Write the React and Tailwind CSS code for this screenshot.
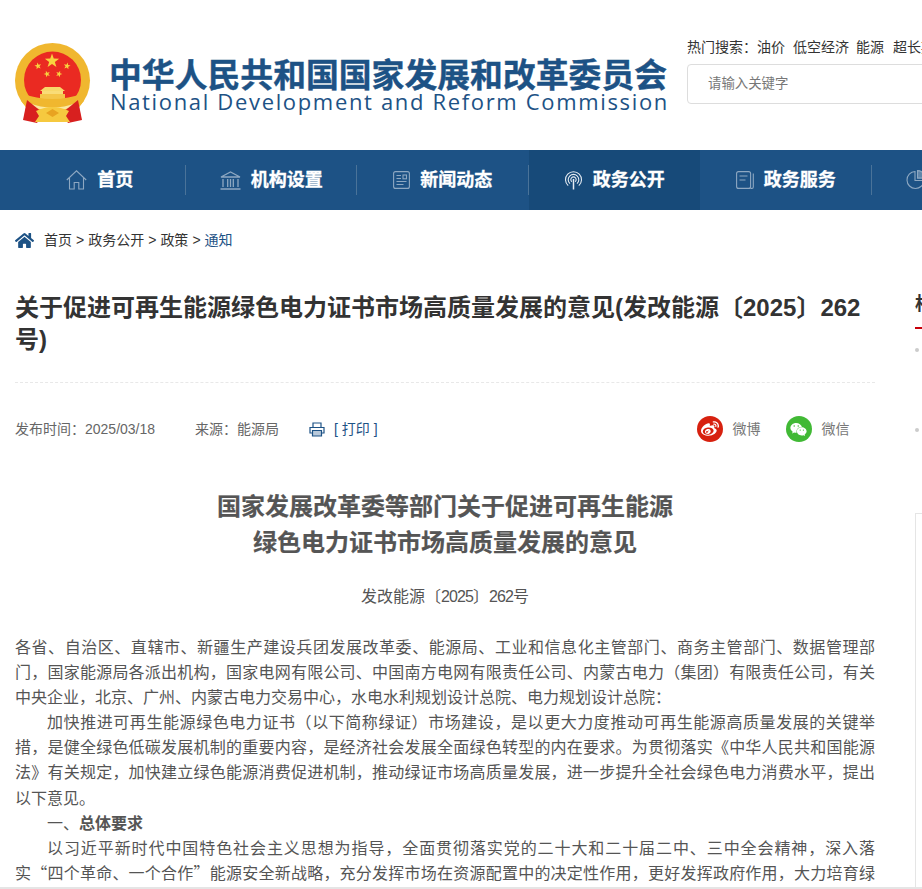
import { FaHome, FaWeibo, FaWeixin } from "react-icons/fa";

function Emblem() {
  const star = (cx, cy, r, rot = 0) => {
    const pts = [];
    for (let i = 0; i < 10; i++) {
      const a = ((-90 + rot + i * 36) * Math.PI) / 180;
      const rr = i % 2 === 0 ? r : r * 0.4;
      pts.push(`${cx + rr * Math.cos(a)},${cy + rr * Math.sin(a)}`);
    }
    return <polygon points={pts.join(" ")} fill="#f8d33f" />;
  };
  return (
    <svg width="76" height="80" viewBox="0 0 76 80" className="shrink-0 block">
      <defs>
        <clipPath id="ring">
          <circle cx="37.500" cy="37.500" r="37.500" />
        </clipPath>
      </defs>
      <circle cx="37.500" cy="37.500" r="37.500" fill="#f0b72f" />
      <circle cx="37.500" cy="37" r="28.500" fill="#ea2a22" />
      {star(37, 18, 7.500)}
      {star(23, 23, 3.600, -12)}
      {star(52, 23, 3.600, 12)}
      {star(32, 31, 3.400, -20)}
      {star(44, 31, 3.400, 20)}
      <path d="M30 44 h15 l5 4 h-25 z" fill="#f8d86a" />
      <rect x="27" y="48" width="21" height="3" fill="#f9dc77" />
      <rect x="25" y="51" width="25" height="6" fill="#f4c64a" />
      <path d="M6 50 Q37.500 62 69 50 V80 H6 Z" fill="#f0b72f" clipPath="url(#ring)" />
      <path d="M14 60 Q37.500 69 61 60 L60 63 Q37.500 72 15 63 Z" fill="#fbe8a0" />
      <path d="M12 57 L8 77 L22 80 L28 70 Z" fill="#d8201f" />
      <path d="M63 57 L67 77 L53 80 L47 70 Z" fill="#d8201f" />
      <path d="M21 68 Q37.500 60 54 68 L51 73 L55 79 L20 79 L24 73 Z" fill="#f6c93f" />
      <path d="M31 70 L37.500 66 L44 70 L37.500 74 Z" fill="#e8a321" />
    </svg>
  );
}

const iconClass = "shrink-0 text-[#8ea8c2]";

const icons = {
  home: (
    <svg width="21" height="20" viewBox="0 0 21 20" fill="none" stroke="currentColor" strokeWidth="1.1" className={iconClass}>
      <path d="M.8 10 10.500 .8 20.200 10M3.500 8v11h4.700v-6.500h4.600V19h4.700V8" />
    </svg>
  ),
  bank: (
    <svg width="21" height="19" viewBox="0 0 21 19" fill="none" stroke="currentColor" strokeWidth="1.3" className={iconClass}>
      <path d="M1 6 10.500 1 20 6Z" />
      <path d="M3 8v8M7.700 8v8M13.300 8v8M18 8v8M10.500 8v8M.5 18h20" />
    </svg>
  ),
  news: (
    <svg width="17" height="18" viewBox="0 0 17 18" fill="none" stroke="currentColor" strokeWidth="1.1" className={iconClass}>
      <rect x=".6" y=".6" width="15.800" height="16.800" rx="2" />
      <path d="M3.500 4.500H8M3.500 7.500H8M3.500 10.500h10M3.500 13.500h7" />
      <rect x="10" y="4" width="3.500" height="3.800" />
    </svg>
  ),
  signal: (
    <svg width="19" height="19" viewBox="0 0 19 19" fill="none" stroke="#e4ebf2" strokeWidth="1.1" className="shrink-0">
      <path d="M4.200 14.700a8 8 0 1 1 10.600 0M6 12.700a5.300 5.300 0 1 1 7 0M7.800 10.700a2.700 2.700 0 1 1 3.400 0" />
      <path d="M9.500 8v10.500" strokeWidth="1.500" />
    </svg>
  ),
  book: (
    <svg width="18" height="18" viewBox="0 0 18 18" fill="none" stroke="currentColor" strokeWidth="1.1" className={iconClass}>
      <rect x=".6" y=".6" width="14" height="16.800" rx="2" />
      <path d="M3.500 5h8M3.500 9h6M17.300 2.500V16a1.400 1.400 0 0 1-1.400 1.400h-1.500" />
    </svg>
  ),
  pie: (
    <svg width="20" height="20" viewBox="0 0 20 20" fill="none" stroke="currentColor" strokeWidth="1.100" className={iconClass}>
      <path d="M9 1.500A8.500 8.500 0 1 0 18 10.500H9Z" />
      <path d="M11.500 .6v7.500H19.500A8 8 0 0 0 11.500 .6Z" fill="currentColor" fillOpacity=".6" />
    </svg>
  ),
};

const navItems = [
  { icon: "home", label: "首页" },
  { icon: "bank", label: "机构设置" },
  { icon: "news", label: "新闻动态" },
  { icon: "signal", label: "政务公开", active: true },
  { icon: "book", label: "政务服务" },
  { icon: "pie", label: "数据发布" },
];

function PrintIcon() {
  return (
    <svg width="16" height="15" viewBox="0 0 16 15" fill="none" stroke="#1d5285" strokeWidth="1.2" className="shrink-0">
      <path d="M4 5V1h8v4" />
      <path d="M3.500 11H1V5.500h14V11h-2.500" />
      <path d="M3.500 8.500h9v5.500h-9z" fill="#b9c9da" />
    </svg>
  );
}

export default function App() {
  return (
    <div className="relative w-full h-[889px] overflow-hidden bg-white font-['Liberation_Sans','Noto_Sans_CJK_SC',sans-serif] text-[#333]">
      <header className="flex h-[150px] w-[1300px]">
        <div className="flex w-[687px] pl-[15px] pt-[43px] shrink-0">
          <Emblem />
          <div className="ml-[18px] mt-[17px] w-[560px] shrink-0 text-[#1d5285]">
            <div className="h-[32px] text-[32.850px] leading-[32px] font-bold whitespace-nowrap [-webkit-text-stroke:0.4px_#1d5285]">中华人民共和国国家发展和改革委员会</div>
            <div className="pl-[1px] text-[22px] leading-[18px] tracking-[1.660px] whitespace-nowrap font-['Open_Sans',sans-serif]">National Development and Reform Commission</div>
          </div>
        </div>
        <div className="w-[400px] pt-[39px] shrink-0">
          <div className="flex h-[16px] text-[14px] leading-[16px] text-[#333] whitespace-nowrap">
            <span className="w-[70px]">热门搜索：</span>
            <span className="w-[36px]">油价</span>
            <span className="w-[63px]">低空经济</span>
            <span className="w-[37px]">能源</span>
            <span>超长期</span>
          </div>
          <div className="mt-[9px] flex h-[40px] w-[400px] items-center rounded-[4px] border border-[#ddd] pl-[20px] text-[13.400px] text-[#777]">请输入关键字</div>
        </div>
      </header>

      <nav className="flex h-[60px] w-[1300px] bg-[#1d5285] pl-[14px]">
        {navItems.map((item, i) => (
          <div key={item.label} className={`relative flex h-[60px] w-[171.500px] shrink-0 items-center justify-center gap-[10px] text-[18px] font-bold text-white ${item.active ? "bg-[#174a79]" : ""}`}>
            {icons[item.icon]}
            <span className="pt-[1px] [-webkit-text-stroke:0.3px_white]">{item.label}</span>
            {i !== 3 && <span className="absolute right-0 top-[15px] h-[30px] w-px bg-[#4a7399]" />}
          </div>
        ))}
      </nav>

      <div className="flex h-[60px] items-center pl-[15px] text-[14px] whitespace-nowrap">
        <FaHome className="text-[#1d5285] text-[19px] shrink-0" />
        <span className="ml-[10px]">首页</span>
        <span className="mx-[4px]">&gt;</span>
        <span>政务公开</span>
        <span className="mx-[4px]">&gt;</span>
        <span>政策</span>
        <span className="mx-[4px]">&gt;</span>
        <span className="text-[#1d5285]">通知</span>
      </div>

      <div className="flex w-[1300px]">
        <main className="ml-[15px] w-[860px] shrink-0">
          <h1 className="mt-[22px] text-[24px] leading-[32px] font-bold text-[#333]">关于促进可再生能源绿色电力证书市场高质量发展的意见(发改能源〔2025〕262号)</h1>
          <div className="mt-[26px] border-t border-dashed border-[#e8e8e8]" />
          <div className="mt-[28px] flex h-[36px] items-center text-[14px] text-[#666] whitespace-nowrap">
            <span className="w-[180px]">发布时间：2025/03/18</span>
            <span className="w-[114px]">来源：能源局</span>
            <PrintIcon />
            <span className="ml-[9px] pt-[1px] text-[#1d5285]">[ 打印 ]</span>
            <div className="ml-[319px] flex items-center">
              <span className="flex h-[26px] w-[26px] items-center justify-center rounded-full bg-[#d7210f] text-white"><FaWeibo className="text-[18px]" /></span>
              <span className="ml-[10px] w-[53px] text-[#777]">微博</span>
              <span className="flex h-[26px] w-[26px] items-center justify-center rounded-full bg-[#41b935] text-white"><FaWeixin className="text-[17px]" /></span>
              <span className="ml-[10px] text-[#777]">微信</span>
            </div>
          </div>
          <h2 className="mt-[42px] text-center text-[24px] leading-[36px] font-bold text-[#555] [-webkit-text-stroke:0.2px_#555]">国家发展改革委等部门关于促进可再生能源<br />绿色电力证书市场高质量发展的意见</h2>
          <p className="mt-[23px] text-center text-[16px] leading-[26px] text-[#555]">发改能源〔<span className="tracking-[-0.900px]">2025</span>〕<span className="tracking-[-0.900px]">262</span>号</p>
          <div className="mt-[24px] text-[16px] leading-[25.100px] text-[#555] text-justify font-['Noto_Sans_CJK_SC',sans-serif]">
            <p>各省、自治区、直辖市、新疆生产建设兵团发展改革委、能源局、工业和信息化主管部门、商务主管部门、数据管理部门，国家能源局各派出机构，国家电网有限公司、中国南方电网有限责任公司、内蒙古电力（集团）有限责任公司，有关中央企业，北京、广州、内蒙古电力交易中心，水电水利规划设计总院、电力规划设计总院：</p>
            <p className="indent-[2em]">加快推进可再生能源绿色电力证书（以下简称绿证）市场建设，是以更大力度推动可再生能源高质量发展的关键举措，是健全绿色低碳发展机制的重要内容，是经济社会发展全面绿色转型的内在要求。为贯彻落实《中华人民共和国能源法》有关规定，加快建立绿色能源消费促进机制，推动绿证市场高质量发展，进一步提升全社会绿色电力消费水平，提出以下意见。</p>
            <p className="indent-[2em]">一、<strong className="font-bold">总体要求</strong></p>
            <p className="indent-[2em]">以习近平新时代中国特色社会主义思想为指导，全面贯彻落实党的二十大和二十届二中、三中全会精神，深入落实“四个革命、一个合作”能源安全新战略，充分发挥市场在资源配置中的决定性作用，更好发挥政府作用，大力培育绿色电力消费市场。</p>
          </div>
        </main>
        <aside className="ml-[40px] w-[300px] shrink-0">
          <div className="mt-[22px] h-[35px] text-[18px] leading-[24px] font-bold">相关文章</div>
          <div className="h-[2px] w-[40px] bg-[#c8000a]" />
          <div className="mt-[19px] h-[80px]"><span className="block h-[4px] w-[4px] rounded-full bg-[#ccc]" /></div>
          <div className="h-[80px]"><span className="block h-[4px] w-[4px] rounded-full bg-[#ccc]" /></div>
          <div className="mt-[5px] h-[400px] border border-[#e5e5e5]" />
        </aside>
      </div>
      <div className="absolute bottom-0 left-0 h-[2px] w-full bg-[#e5e5e5]" />
    </div>
  );
}
